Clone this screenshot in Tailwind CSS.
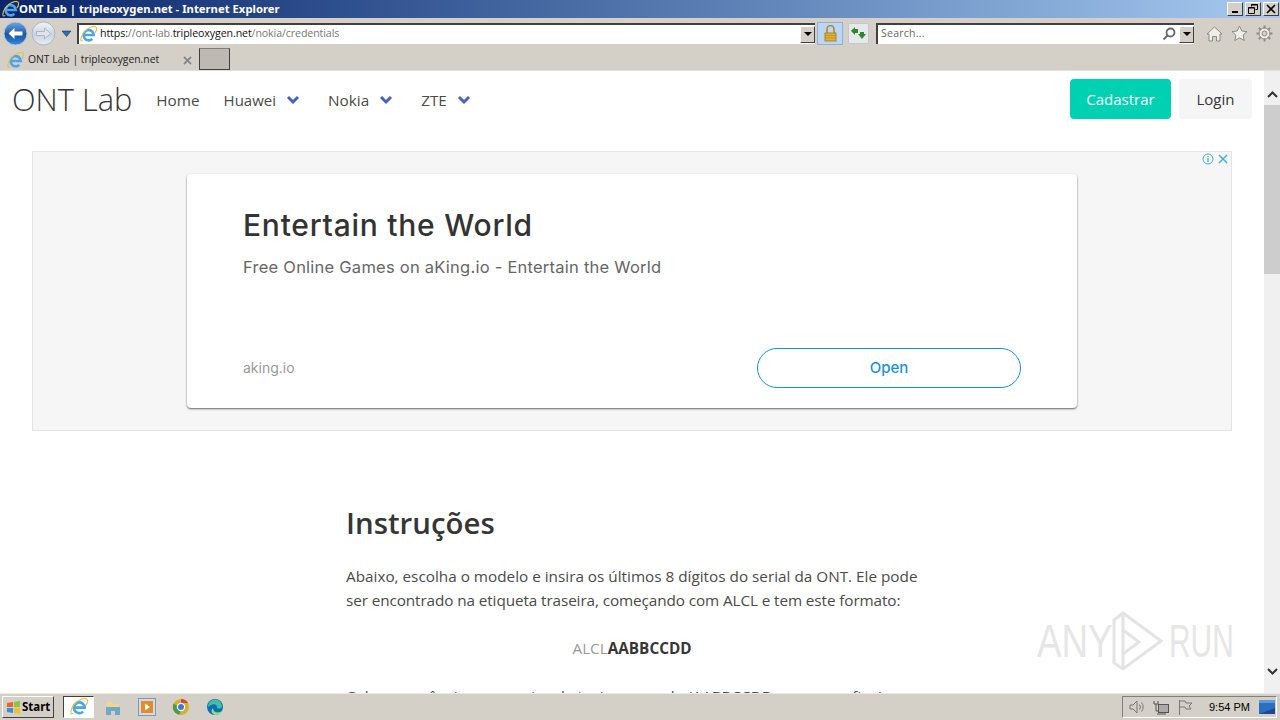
<!DOCTYPE html>
<html><head><meta charset="utf-8"><script src="https://cdn.jsdelivr.net/npm/@tailwindcss/browser@4"></script></head>
<body class="w-[1280px] h-[720px] overflow-hidden bg-white flex flex-col font-['Open_Sans',sans-serif]">
<!-- title bar -->
<div class="h-[18px] shrink-0 flex items-center justify-between bg-gradient-to-r from-[#0a246a] to-[#a6caf0] pl-[2px] pr-[1px]">
  <div class="flex items-center gap-[0px]">
    <svg width="17" height="17" viewBox="0 0 16 16" fill="none"><path d="M4 8.500h9a4.800 4.800 0 1 0-1.400 3.600" stroke="#4aa6ea" stroke-width="2.400"/><path d="M3 13.500C0 15.500 0 12 3 6.500 6 1.500 13-.5 15 1c1 1 .5 3.500-1 5.500" stroke="#e8c23a" stroke-width="1"/></svg>
    <span class="font-['Noto_Sans'] font-bold text-[11.300px] text-white whitespace-nowrap">ONT Lab | tripleoxygen.net - Internet Explorer</span>
  </div>
  <div class="flex gap-[2px]">
    <div class="w-[16px] h-[14px] bg-[#d4d0c8] border-t border-l border-white border-r border-b border-r-[#404040] border-b-[#404040] flex items-end justify-center pb-[2px]"><div class="w-[6px] h-[2px] bg-black"></div></div>
    <div class="w-[16px] h-[14px] bg-[#d4d0c8] border-t border-l border-white border-r border-b border-r-[#404040] border-b-[#404040] flex items-center justify-center"><svg width="10" height="10" viewBox="0 0 10 10" fill="none" stroke="#000"><path d="M3.500 2.500V.5h6v5h-2M3.500 1h6M.5 3.500h6v6h-6zM.5 4h6" /></svg></div>
    <div class="w-[16px] h-[14px] bg-[#d4d0c8] border-t border-l border-white border-r border-b border-r-[#404040] border-b-[#404040] flex items-center justify-center"><svg width="10" height="10" viewBox="0 0 10 10" stroke="#000" stroke-width="1.600"><path d="M1 1l8 8M9 1l-8 8"/></svg></div>
  </div>
</div>
<!-- address bar -->
<div class="h-[30px] shrink-0 bg-[#d4d0c8] flex items-center pl-[3px]">
  <svg width="25" height="25" viewBox="0 0 25 25"><defs><linearGradient id="bk" x1="0" y1="0" x2="0" y2="1"><stop offset="0" stop-color="#6fa8e0"/><stop offset=".55" stop-color="#1a55a8"/><stop offset="1" stop-color="#2f8be0"/></linearGradient><linearGradient id="fw" x1="0" y1="0" x2="0" y2="1"><stop offset="0" stop-color="#f2f5f8"/><stop offset=".55" stop-color="#c8d3e0"/><stop offset="1" stop-color="#e8eef4"/></linearGradient></defs><circle cx="12.500" cy="12.500" r="11.500" fill="url(#bk)" stroke="#b8c4d2"/><path d="M5.500 12.500l6-5.500v3.500h8v4h-8V18z" fill="#fff"/></svg>
  <svg class="ml-[3px]" width="25" height="25" viewBox="0 0 25 25"><circle cx="12.500" cy="12.500" r="11.500" fill="url(#fw)" stroke="#aab6c4"/><path d="M19.500 12.500l-6-5.500v3.500h-8v4h8V18z" fill="#dfe5ec" stroke="#9fadbc" stroke-width=".8"/></svg>
  <svg class="ml-[5px]" width="11" height="7" viewBox="0 0 11 7"><path d="M1 1h9L5.500 6.500z" fill="#2a6fb8" stroke="#123" stroke-width=".5"/></svg>
  <div class="ml-[5px] w-[738px] h-[21px] bg-white border-t-2 border-l-2 border-[#404040] flex items-center justify-between">
    <div class="flex items-center gap-[3px] pl-[1px]">
      <svg width="17" height="17" viewBox="0 0 16 16" fill="none"><path d="M4 8.500h9a4.800 4.800 0 1 0-1.400 3.600" stroke="#4aa6ea" stroke-width="2.400"/><path d="M3 13.500C0 15.500 0 12 3 6.500 6 1.500 13-.5 15 1c1 1 .5 3.500-1 5.500" stroke="#e8c23a" stroke-width="1"/></svg>
      <span class="text-[10.630px] text-[#777] whitespace-nowrap tracking-[-0.1px]"><span class="text-[#111]">https:</span>//ont-lab.<span class="text-[#111]">tripleoxygen.net</span>/nokia/credentials</span>
    </div>
    <div class="w-[15px] h-[17px] bg-[#d4d0c8] border border-t-white border-l-white border-r-[#404040] border-b-[#404040] flex items-center justify-center"><div class="border-x-[4px] border-x-transparent border-t-[4px] border-t-black"></div></div>
  </div>
  <div class="ml-[2px] w-[26px] h-[23px] bg-[#bdd6f4] border border-[#8fb0d8] flex items-center justify-center">
    <svg width="13" height="17" viewBox="0 0 13 17"><path d="M3 8V4a3.500 3.500 0 0 1 7 0v4" fill="none" stroke="#a8882a" stroke-width="1.500"/><rect x="1" y="8" width="11" height="8" fill="#e0b030" stroke="#a8882a"/><path d="M1 10.500h11M1 13h11" stroke="#a8882a" stroke-width=".6"/></svg>
  </div>
  <div class="ml-[5px] w-[21px] h-[21px] bg-[#e6e8ec] border border-[#c4c8cc] rounded-[2px] flex items-center justify-center">
    <svg width="15" height="13" viewBox="0 0 15 13" fill="#2a8a2a"><path d="M0 4l4-4v2h3v4H4v2zM15 7l-4 5-4-5h2V5h4v2z"/></svg>
  </div>
  <div class="ml-[7px] w-[318px] h-[21px] bg-white border-t-2 border-l-2 border-[#404040] flex items-center justify-between">
    <span class="pl-[3px] text-[10.500px] text-[#666] tracking-[0.25px]">Search...</span>
    <div class="flex items-center gap-[3px]">
      <svg width="14" height="14" viewBox="0 0 14 14" fill="none" stroke="#666" stroke-width="1.800"><circle cx="8.500" cy="5.500" r="4"/><path d="M5.500 8.500L1.500 12.500"/></svg>
      <div class="w-[15px] h-[17px] bg-[#d4d0c8] border border-t-white border-l-white border-r-[#404040] border-b-[#404040] flex items-center justify-center"><div class="border-x-[4px] border-x-transparent border-t-[4px] border-t-black"></div></div>
    </div>
  </div>
  <div class="ml-[12px] flex gap-[8px] items-center">
    <svg width="17" height="17" viewBox="0 0 17 17" fill="#f0eee8" stroke="#8a8a84"><path d="M1 9l7.500-7L16 9h-2v7h-3.500v-4.500h-4V16H3V9z"/></svg>
    <svg width="17" height="17" viewBox="0 0 17 17" fill="#f0eee8" stroke="#8a8a84"><path d="M8.500 1l2.300 5 5.200.6-3.900 3.500 1.100 5.400-4.700-2.700-4.700 2.700 1.100-5.400L1 6.600l5.200-.6z"/></svg>
    <svg width="17" height="17" viewBox="0 0 17 17" fill="none" stroke="#8a8a84"><circle cx="8.500" cy="8.500" r="5.500" fill="#f0eee8"/><circle cx="8.500" cy="8.500" r="2.500" fill="#d4d0c8"/><path d="M8.500 .5v3M8.500 13.500v3M.5 8.500h3M13.500 8.500h3M2.800 2.800l2.200 2.200M12 12l2.200 2.200M14.200 2.800L12 5M5 12l-2.200 2.200" stroke-width="1.800"/></svg>
  </div>
</div>
<!-- tab bar -->
<div class="h-[23px] shrink-0 bg-[#d4d0c8] flex items-start border-b border-[#e4e0d8]">
  <div class="w-[197px] h-[22px] mt-[1px] flex items-center pl-[7px] pr-[5px]">
    <svg width="17" height="17" viewBox="0 0 16 16" fill="none"><path d="M4 8.500h9a4.800 4.800 0 1 0-1.400 3.600" stroke="#4aa6ea" stroke-width="2.400"/><path d="M3 13.500C0 15.500 0 12 3 6.500 6 1.500 13-.5 15 1c1 1 .5 3.500-1 5.500" stroke="#e8c23a" stroke-width="1"/></svg>
    <span class="ml-[4px] text-[10.350px] text-[#222] whitespace-nowrap">ONT Lab | tripleoxygen.net</span>
    <svg class="ml-auto" width="9" height="9" viewBox="0 0 9 9" stroke="#888" stroke-width="1.800"><path d="M1 1l7 7M8 1l-7 7"/></svg>
  </div>
  <div class="ml-[2px] w-[31px] h-[22px] bg-[#bfb9b4] border border-[#404040] border-t-[#808080]"></div>
</div>
<!-- page -->
<div class="flex-1 min-h-0 flex">
  <div class="flex-1 min-w-0 flex flex-col overflow-hidden relative">
    <nav class="h-[56px] shrink-0 flex items-center pl-[12px] pr-[12px] text-[#4a4a4a]">
      <span class="text-[30.800px] font-light text-[#363636] leading-none">ONT Lab</span>
      <span class="ml-[24px] pt-[2px] text-[15.300px]">Home</span>
      <span class="ml-[24px] pt-[2px] text-[15px]">Huawei</span>
      <svg class="ml-[10px] mt-[2px]" width="14" height="10" viewBox="0 0 14 10" fill="none" stroke="#485fc7" stroke-width="3"><path d="M2 2l5 5 5-5"/></svg>
      <span class="ml-[28px] pt-[2px] text-[15.300px]">Nokia</span>
      <svg class="ml-[10px] mt-[2px]" width="14" height="10" viewBox="0 0 14 10" fill="none" stroke="#485fc7" stroke-width="3"><path d="M2 2l5 5 5-5"/></svg>
      <span class="ml-[28px] pt-[2px] text-[15.300px]">ZTE</span>
      <svg class="ml-[10px] mt-[2px]" width="14" height="10" viewBox="0 0 14 10" fill="none" stroke="#485fc7" stroke-width="3"><path d="M2 2l5 5 5-5"/></svg>
      <div class="ml-auto flex gap-[8px]">
        <div class="w-[101px] h-[40px] pt-[1px] rounded-[4px] bg-[#00d1b2] text-white text-[15px] flex items-center justify-center">Cadastrar</div>
        <div class="w-[73px] h-[40px] pt-[1px] rounded-[4px] bg-[#f5f5f5] text-[#363636] text-[15px] flex items-center justify-center">Login</div>
      </div>
    </nav>
    <div class="mt-[24px] ml-[32px] w-[1200px] h-[280px] shrink-0 bg-[#f6f6f6] border border-[#e4e4e4] relative flex justify-center pt-[22px]">
      <div class="absolute top-[1px] right-[2px] flex items-center gap-[3px]">
        <svg width="12" height="12" viewBox="0 0 12 12" fill="none" stroke="#3bb0d8"><circle cx="6" cy="6" r="5"/><path d="M6 5v4M6 3v1.200" stroke-width="1.300"/></svg>
        <svg width="12" height="12" viewBox="0 0 12 12" stroke="#3bb0d8" stroke-width="1.400"><path d="M2 2l8 8M10 2l-8 8"/></svg>
      </div>
      <div class="w-[890px] h-[234px] bg-white rounded-[4px] shadow-[0_1px_2px_rgba(0,0,0,0.6)] flex flex-col pl-[56px] pr-[56px]">
        <div class="mt-[31px] text-[30px] leading-[40px] tracking-[0.75px] font-['Inter'] font-medium text-[#333]">Entertain the World</div>
        <div class="mt-[10px] text-[16.500px] leading-[24px] tracking-[0.24px] font-['Inter'] text-[#666]">Free Online Games on aKing.io - Entertain the World</div>
        <div class="mt-auto mb-[20px] flex items-center justify-between">
          <span class="text-[14px] font-['Inter'] text-[#999] -mt-[1px]">aking.io</span>
          <div class="w-[264px] h-[40px] rounded-[20px] border border-[#1a8fe0] text-[#1a8fe0] font-['Inter'] font-medium text-[15px] flex items-center justify-center">Open</div>
        </div>
      </div>
    </div>
    <main class="ml-[346px] w-[572px] shrink-0 text-[#4a4a4a]">
      <h1 class="mt-[72px] text-[29.400px] leading-[40px] font-semibold text-[#363636]">Instruções</h1>
      <p class="mt-[21px] text-[15.300px] leading-[24px] whitespace-nowrap">Abaixo, escolha o modelo e insira os últimos 8 dígitos do serial da ONT. Ele pode<br><span class="tracking-[-0.1px]">ser encontrado na etiqueta traseira, começando com ALCL e tem este formato:</span></p>
      <p class="mt-[24px] text-[15.300px] leading-[24px] text-center"><span class="text-[#999]">ALCL</span><b class="text-[#363636]">AABBCCDD</b></p>
      <p class="mt-[24px] text-[15.300px] leading-[24px] whitespace-nowrap">Cole a sequência numa caixa de texto, exemplo (AABBCCDD, sem o prefixo).</p>
    </main>
    <div class="absolute left-[1037px] top-[539px] flex items-center text-[#e6e6e6] font-['Liberation_Sans'] text-[46px] leading-none">
      <span class="w-[66px] scale-x-[0.8] origin-left">ANY</span>
      <svg class="ml-[8px]" width="52" height="62" viewBox="0 0 52 62" fill="none" stroke="#e4e4e4" stroke-width="3"><path d="M3 10L12 3l38 28-38 28-9-6zM3 10v43M12 3v56M12 20v24l16-12z"/></svg>
      <span class="ml-[6px] w-[60px] scale-x-[0.65] origin-left">RUN</span>
    </div>
  </div>
  <!-- scrollbar -->
  <div class="w-[16px] shrink-0 bg-[#f0f0f0] flex flex-col items-center">
    <div class="h-[17px] mt-[15px] flex items-center justify-center"><svg width="11" height="7" viewBox="0 0 11 7" fill="none" stroke="#333" stroke-width="2"><path d="M1 6l4.500-4.500L10 6"/></svg></div>
    <div class="w-[16px] h-[169px] mt-[2px] bg-[#cdcdcd]"></div>
    <div class="mt-auto mb-[13px] h-[17px] flex items-center justify-center"><svg width="11" height="7" viewBox="0 0 11 7" fill="none" stroke="#333" stroke-width="2"><path d="M1 1l4.500 4.500L10 1"/></svg></div>
  </div>
</div>
<!-- taskbar -->
<div class="h-[27px] shrink-0 bg-[#d4d0c8] border-t border-[#ece9e2] flex items-center pl-[2px] pr-[3px]">
  <div class="w-[52px] h-[22px] border border-t-white border-l-white border-r-[#404040] border-b-[#404040] flex items-center pl-[3px] gap-[1px]">
    <svg width="15" height="15" viewBox="0 0 15 15"><path d="M1 3l6-1v5H1z" fill="#e8652a"/><path d="M8 2l6-1v6H8z" fill="#8cc43c"/><path d="M1 8h6v5l-6-1z" fill="#3a8fd8"/><path d="M8 8h6v6l-6-1z" fill="#f0c030"/></svg>
    <span class="font-['Noto_Sans'] font-bold text-[11.500px] text-black">Start</span>
  </div>
  <div class="ml-[9px] w-[31px] h-[22px] bg-white border border-t-[#404040] border-l-[#404040] border-r-white border-b-white flex items-center justify-center">
    <svg width="18" height="18" viewBox="0 0 16 16" fill="none"><path d="M4 8.500h9a4.800 4.800 0 1 0-1.400 3.600" stroke="#4aa6ea" stroke-width="2.400"/><path d="M3 13.500C0 15.500 0 12 3 6.500 6 1.500 13-.5 15 1c1 1 .5 3.500-1 5.500" stroke="#e8c23a" stroke-width="1"/></svg>
  </div>
  <svg class="ml-[11px]" width="16" height="17" viewBox="0 0 16 17"><path d="M2 3h5l1 2h6v4H2z" fill="#ecd98c"/><path d="M1 8h14v8H10v-4H6v4H1z" fill="#6fa8c8"/></svg>
  <svg class="ml-[17px]" width="18" height="18" viewBox="0 0 18 18"><rect x=".5" y=".5" width="17" height="17" fill="#cfdcec" stroke="#7a98b8"/><rect x="3" y="3" width="12" height="12" fill="#e88a20"/><path d="M7 5.500l5 3.500-5 3.500z" fill="#fff"/></svg>
  <svg class="ml-[16px]" width="18" height="18" viewBox="0 0 18 18"><circle cx="9" cy="9" r="8" fill="#d8b030"/><path d="M9 1a8 8 0 0 1 7 4H9z" fill="#d84436"/><path d="M1.600 5.500A8 8 0 0 0 7 16.800L10 11z" fill="#4a9a4a"/><circle cx="9" cy="9" r="3.600" fill="#3a7ad8" stroke="#fff" stroke-width="1.200"/></svg>
  <svg class="ml-[16px]" width="18" height="18" viewBox="0 0 18 18"><circle cx="9" cy="9" r="8" fill="#0f6cb8"/><path d="M2 9a7 7 0 0 1 14-1c0 3-4 3-5 2 1-3-3-5-6-3-2 1-3 2-3 2z" fill="#42c0a0"/><path d="M7 10c0 4 4 6 9 3-2 4-7 5-9 3s-2-4 0-6z" fill="#8adf80"/></svg>
  <div class="ml-auto w-[155px] h-[22px] flex items-center border border-t-[#808080] border-l-[#808080] border-r-white border-b-white">
    <svg class="ml-[6px]" width="16" height="16" viewBox="0 0 16 16" fill="none" stroke="#777"><path d="M1 6h3l4-4v12l-4-4H1zM10.500 5.500a4 4 0 0 1 0 5M12.500 3.500a7 7 0 0 1 0 9"/></svg>
    <svg class="ml-[8px]" width="16" height="16" viewBox="0 0 16 16" fill="none" stroke="#555"><rect x="5.500" y="5.500" width="10" height="8" fill="#aaa"/><path d="M1 2v3h4V2M3 5v7h3M4 15h9"/></svg>
    <svg class="ml-[8px]" width="16" height="16" viewBox="0 0 16 16" fill="none" stroke="#777"><path d="M2.500 1v15M3 2h5l1 2h6l-3 3 2 3H9L8 8H3"/></svg>
    <span class="ml-[16px] font-['Liberation_Sans'] text-[11px] text-black whitespace-nowrap">9:54 PM</span>
    <svg class="ml-auto mr-[1px]" width="16" height="14" viewBox="0 0 16 14"><rect width="16" height="14" fill="#2a6fc0"/><path d="M0 14l16-6v6z" fill="#1a4a90"/><rect y="0" width="16" height="3" fill="#5a9ae0"/></svg>
  </div>
</div>
</body></html>
